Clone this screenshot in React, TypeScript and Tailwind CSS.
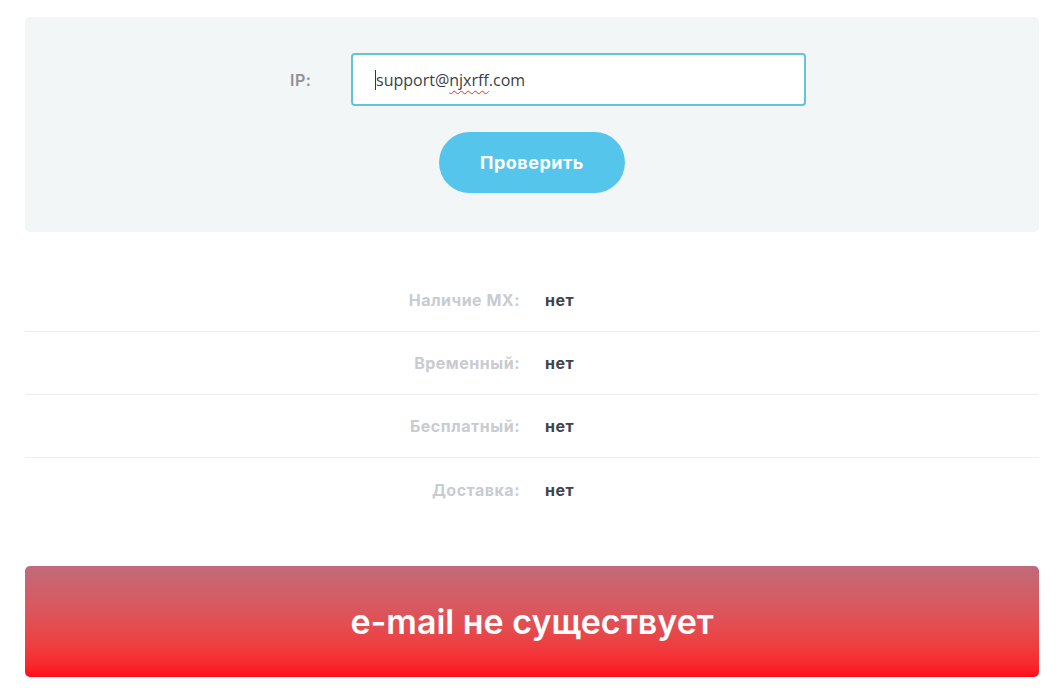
export default function App() {
  const rows = [
    { label: "Наличие MX:", value: "нет" },
    { label: "Временный:", value: "нет" },
    { label: "Бесплатный:", value: "нет" },
    { label: "Доставка:", value: "нет" },
  ]

  return (
    <div className="min-h-screen bg-white pt-[17px] font-['Open_Sans',sans-serif]">
      <div className="ml-[25px] w-[1014px]">
        <div className="rounded-[5px] bg-[#f2f6f7] pt-[36px] pb-[39px]">
          <div className="flex items-center">
            <label className="ml-[265px] w-[61px] font-['Inter',sans-serif] text-[16px] font-semibold tracking-[0.5px] text-[#8f9194]">IP:</label>
            <div className="flex h-[53px] w-[455px] items-center rounded-[4px] border-2 border-[#63c3dc] bg-white pl-[22px]">
              <span className="h-[20px] w-px bg-[#333]" />
              <span className="text-[16px] text-[#3a3f47]">
                support@
                <span className="underline decoration-wavy decoration-[#e03030] decoration-1 underline-offset-4">njxrff</span>
                .com
              </span>
            </div>
          </div>
          <div className="mt-[26px] flex justify-center">
            <button className="h-[61px] w-[186px] rounded-full bg-[#56c5ec] font-['Inter',sans-serif] text-[18px] font-bold tracking-[0.5px] text-white">
              Проверить
            </button>
          </div>
        </div>

        <div className="mt-[37px]">
          {rows.map((r, i) => (
            <div
              key={r.label}
              className={`flex h-[63px] items-center font-['Inter',sans-serif] text-[16px] font-bold tracking-[0.5px] ${i < rows.length - 1 ? "border-b border-[#ebedef]" : ""}`}
            >
              <div className="w-[495px] text-right text-[#c8ccd1]">{r.label}</div>
              <div className="ml-[25px] text-[#3d434d]">{r.value}</div>
            </div>
          ))}
        </div>

        <div className="mt-[45px] flex h-[111px] items-center justify-center rounded-[5px] bg-gradient-to-b from-[#c06a7a] to-[#ff0818]">
          <span className="font-['Inter',sans-serif] text-[34px] font-semibold text-white">e-mail не существует</span>
        </div>
      </div>
    </div>
  )
}
